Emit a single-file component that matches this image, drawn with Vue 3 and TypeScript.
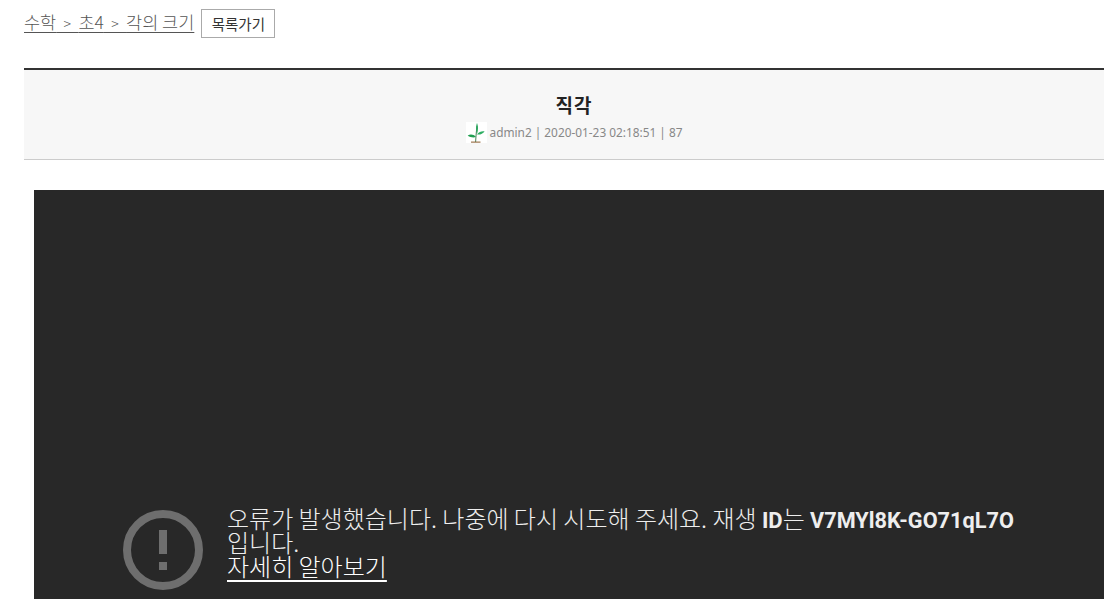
<script setup lang="ts">
const crumbs: string[] = ['수학', '초4', '각의 크기']
</script>

<template>
  <div class="page">
    <nav class="crumbs">
      <a class="trail" href="#">
        <template v-for="(c, i) in crumbs" :key="c">
          <span>{{ c }}</span><span v-if="i < crumbs.length - 1" class="sep">{{ ' > ' }}</span>
        </template>
      </a>
      <button class="back" type="button">목록가기</button>
    </nav>

    <header class="head">
      <h1 class="title">직각</h1>
      <div class="meta">
        <svg class="avatar" width="21" height="21" viewBox="0 0 21 21">
          <rect width="21" height="21" fill="#fff" />
          <path d="M9.6 20 C9.8 15 10.4 10 11 4" stroke="#5c8f6a" stroke-width="1.1" fill="none" />
          <path d="M11 1 C9.7 4 9.9 8 11 12 C12.3 8 12.3 4 11 1Z" fill="#25a55a" />
          <path d="M10 15 C7.5 12.2 4.5 12 1.7 13.4 C4.2 15.4 7.4 15.8 10 15Z" fill="#1f9e4f" />
          <path d="M11 12.4 C13 9.8 16 8.8 18.6 9.4 C16.8 11.8 13.8 13 11 12.4Z" fill="#2fae63" />
          <rect x="5" y="19.6" width="9.5" height="1" fill="#8a5a2b" />
        </svg>
        <span>admin2 | 2020-01-23 02:18:51 | 87</span>
      </div>
    </header>

    <section class="player">
      <div class="error">
        <svg class="warn" width="80" height="80" viewBox="0 0 80 80">
          <circle cx="40" cy="40" r="36" fill="none" stroke="#6e6e6e" stroke-width="8" />
          <rect x="36" y="20" width="8" height="24" fill="#6e6e6e" />
          <rect x="36" y="52" width="8" height="8" fill="#6e6e6e" />
        </svg>
        <div class="msg">
          <div class="line">오류가 발생했습니다. 나중에 다시 시도해 주세요. 재생 <b>ID</b>는 <b class="code">V7MYl8K-GO71qL7O</b> 입니다.</div>
          <a href="#">자세히 알아보기</a>
        </div>
      </div>
    </section>
  </div>
</template>

<style>
html, body { margin: 0; overflow: hidden; background: #fff; }
</style>

<style scoped>
.page {
  width: 1104px;
  height: 599px;
  overflow: hidden;
  padding-left: 24px;
  box-sizing: border-box;
  font-family: "Noto Sans CJK KR", "Noto Sans", sans-serif;
}
.crumbs {
  display: flex;
  align-items: center;
  height: 29px;
  margin-top: 9px;
  gap: 7px;
}
.trail {
  font-size: 17.5px;
  line-height: 20px;
  font-weight: 300;
  color: #555;
  text-decoration: underline;
  text-decoration-thickness: 1px;
  text-underline-offset: 3px;
  white-space: pre;
  margin-top: -2px;
}
.sep { font-size: 14px; word-spacing: 4.25px; }
.back {
  width: 74px;
  height: 29px;
  padding: 0;
  box-sizing: border-box;
  border: 1px solid #aaa;
  background: #fff;
  color: #333;
  font: 14.5px "Noto Sans CJK KR", sans-serif;
}
.head {
  margin-top: 30px;
  height: 92px;
  box-sizing: border-box;
  border-top: 2px solid #333;
  border-bottom: 1px solid #ccc;
  background: #f7f7f7;
  display: flex;
  flex-direction: column;
  align-items: center;
  width: 1100px;
}
.title {
  margin: 23px 0 0;
  font-size: 19px;
  line-height: 24px;
  letter-spacing: 1px;
  font-weight: 700;
  color: #222;
}
.meta {
  display: flex;
  align-items: center;
  gap: 3px;
  margin-top: 5px;
  font-size: 11.85px;
  line-height: 21px;
  color: #888;
  font-family: "Noto Sans", "Noto Sans CJK KR", sans-serif;
}
.player {
  margin: 30px 0 0 10px;
  width: 1100px;
  height: 440px;
  background: #282828;
  position: relative;
}
.error {
  position: absolute;
  left: 89px;
  top: 320px;
  width: 900px;
  display: flex;
  gap: 24px;
}
.warn { flex: none; }
.msg {
  width: 800px;
  color: #eee;
  font-size: 24px;
  font-weight: 300;
  line-height: 24px;
  font-family: "Noto Sans CJK KR", Roboto, sans-serif;
  margin-top: -4px;
}
.msg b {
  font-family: Roboto, sans-serif;
  font-size: 22px;
  font-weight: 700;
  line-height: 0;
}
.msg b.code { font-size: 21.7px; }
.msg a {
  display: inline-block;
  height: 24px;
  color: #fff;
  text-decoration: underline;
  text-underline-offset: 4px;
  text-decoration-thickness: 2px;
}
</style>
